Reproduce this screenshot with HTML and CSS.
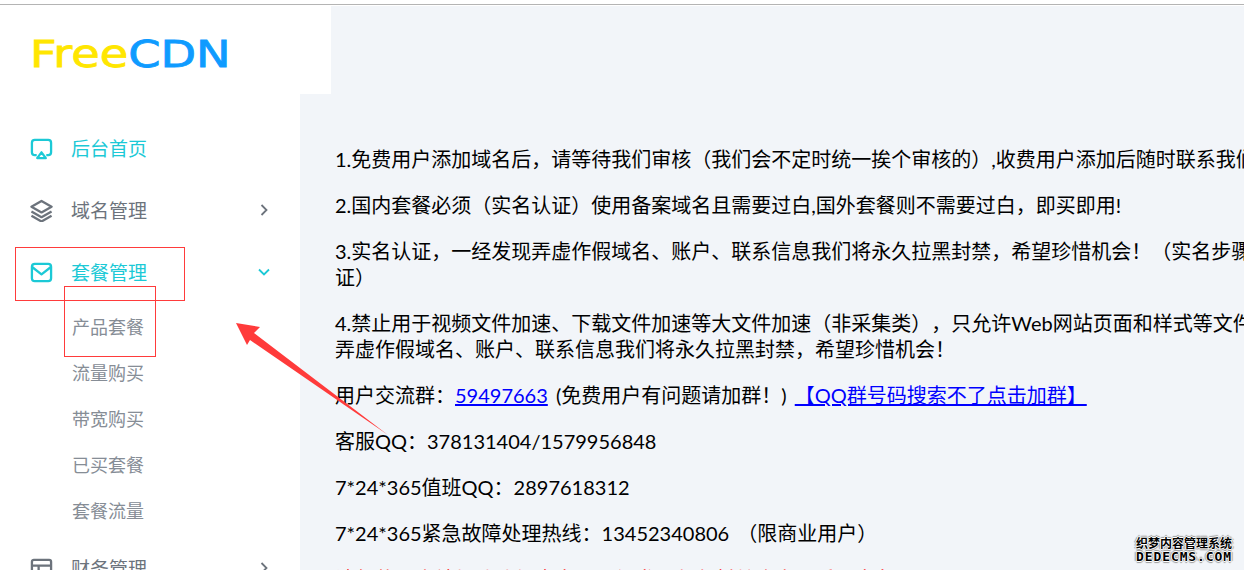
FILE: index.html
```html
<!DOCTYPE html>
<html lang="zh-CN">
<head>
    <meta charset="UTF-8">
    <meta name="viewport" content="width=device-width, initial-scale=1.0">
    <title>FreeCDN</title>
    <link rel="stylesheet" href="styles.css">
</head>
<body>
    <div id="page">
        <div class="topline"></div>
        <div class="logo-box">
            <div class="logo"><span class="logo-free">Free</span><span class="logo-cdn">CDN</span></div>
        </div>
        <div class="layout">
            <nav class="sidebar">
                <a class="nav-item active" href="#">
                    <svg class="nav-icon" viewBox="0 0 24 24"><path d="M7 19H5a3 3 0 0 1-3-3V6a3 3 0 0 1 3-3h14a3 3 0 0 1 3 3v10a3 3 0 0 1-3 3h-2"/><path d="M12 16l4.500 6h-9z"/></svg>
                    <span class="nav-text">后台首页</span>
                </a>
                <a class="nav-item" href="#">
                    <svg class="nav-icon" viewBox="0 0 24 24"><path d="M12 2L1.500 8 12 14l10.500-6z"/><path d="M1.500 13L12 19l10.500-6"/><path d="M1.500 17.500L12 23.500l10.500-6"/></svg>
                    <span class="nav-text">域名管理</span>
                    <svg class="chevron" viewBox="0 0 12 12"><path d="M3.500 1l5 5-5 5"/></svg>
                </a>
                <a class="nav-item active" href="#">
                    <svg class="nav-icon" viewBox="0 0 24 24"><rect x="2" y="3" width="20" height="18" rx="3"/><path d="M2.500 6.500L12 14l9.500-7.500"/></svg>
                    <span class="nav-text">套餐管理</span>
                    <svg class="chevron" viewBox="0 0 12 12"><path d="M1 3.500l5 5 5-5"/></svg>
                </a>
                <div class="sub-menu">
                    <a href="#">产品套餐</a>
                    <a href="#">流量购买</a>
                    <a href="#">带宽购买</a>
                    <a href="#">已买套餐</a>
                    <a href="#">套餐流量</a>
                </div>
                <a class="nav-item" href="#">
                    <svg class="nav-icon" viewBox="0 0 24 24"><rect x="2" y="3" width="20" height="18" rx="2"/><path d="M2 9h20M9 9v12"/></svg>
                    <span class="nav-text">财务管理</span>
                    <svg class="chevron" viewBox="0 0 12 12"><path d="M3.500 1l5 5-5 5"/></svg>
                </a>
            </nav>
            <main class="content">
                <p>1.免费用户添加域名后，请等待我们审核（我们会不定时统一挨个审核的）,收费用户添加后随时联系我们审核</p>
                <p>2.国内套餐必须（实名认证）使用备案域名且需要过白,国外套餐则不需要过白，即买即用!</p>
                <p>3.实名认证，一经发现弄虚作假域名、账户、联系信息我们将永久拉黑封禁，希望珍惜机会！（实名步骤请先认<br>证）</p>
                <p>4.禁止用于视频文件加速、下载文件加速等大文件加速（非采集类），只允许Web网站页面和样式等文件加速，<br>弄虚作假域名、账户、联系信息我们将永久拉黑封禁，希望珍惜机会！</p>
                <p>用户交流群：<a href="#">59497663</a> (免费用户有问题请加群！) <a href="#">【QQ群号码搜索不了点击加群】</a></p>
                <p>客服QQ：378131404/1579956848</p>
                <p>7*24*365值班QQ：2897618312</p>
                <p>7*24*365紧急故障处理热线：13452340806 （限商业用户）</p>
                <p class="notice">请勿使用本站加速违规内容，一经发现永久封禁账户，后果自负</p>
            </main>
        </div>

        <!-- annotations drawn over the screenshot -->
        <div class="mark mark-menu"></div>
        <div class="mark mark-sub"></div>
        <svg class="arrow" width="1244" height="570" viewBox="0 0 1244 570"><polygon points="236,323 260,327 254,333 388,435 250,340 247,345"/></svg>

        <div class="watermark">
            <div class="wm-cn">织梦内容管理系统</div>
            <div class="wm-en">DEDECMS.COM</div>
        </div>
    </div>
</body>
</html>
```

FILE: styles.css
```css
body {
    margin: 0;
    padding: 0;
    font-family: "Lato", "Noto Sans CJK SC", sans-serif;
    text-spacing-trim: space-all;
}

a {
    text-decoration: none;
}

#page {
    position: relative;
    width: 1244px;
    height: 570px;
    overflow: hidden;
    background: #f2f5f9;
}

.topline {
    height: 6px;
    box-sizing: border-box;
    background: #fff;
    border-top: 4px solid #fff;
    border-bottom: 1px solid #fff;
    box-shadow: inset 0 1px 0 #b4b4b4;
}

.logo-box {
    width: 331px;
    height: 88px;
    background: #fff;
}

.logo {
    padding: 27px 0 0 30px;
    font-family: "DejaVu Sans", sans-serif;
    font-size: 37px;
    line-height: 44px;
    white-space: nowrap;
    -webkit-text-stroke: 0.8px currentColor;
    transform: scaleX(1.25);
    transform-origin: 30px 0;
}

.logo-free {
    color: #ffe600;
}

.logo-cdn {
    color: #0f9bff;
}

.layout {
    display: flex;
    height: 476px;
}

.sidebar {
    width: 300px;
    flex-shrink: 0;
    box-sizing: border-box;
    padding-top: 23px;
    background: #fff;
}

.nav-item {
    display: flex;
    align-items: center;
    height: 62px;
    padding: 0 30px 0 30px;
    color: #6c737c;
}

.nav-item.active {
    color: #1cc9d6;
}

.nav-icon {
    width: 23px;
    height: 23px;
    flex-shrink: 0;
    fill: none;
    stroke: currentColor;
    stroke-width: 2.4;
    stroke-linejoin: round;
}

.nav-text {
    flex: 1;
    margin-left: 18px;
    padding-bottom: 2px;
    font-size: 19px;
}

.chevron {
    width: 12px;
    height: 12px;
    fill: none;
    stroke: currentColor;
    stroke-width: 1.8;
}

.sub-menu {
    display: flex;
    flex-direction: column;
    padding: 1px 0 3px;
}

.sub-menu a {
    height: 46px;
    line-height: 46px;
    padding-left: 72px;
    font-size: 18px;
    color: #868d96;
}

.content {
    flex: 1;
    min-width: 0;
    padding: 52px 0 0 35px;
    overflow: hidden;
    color: #000;
    font-size: 20px;
    line-height: 26px;
    word-spacing: 3px;
    white-space: nowrap;
}

.content p {
    margin: 0 0 20px;
}

.content a {
    color: #0000ff;
    text-decoration: underline;
}

.content .notice {
    color: #ff0000;
}

.mark {
    position: absolute;
    box-sizing: border-box;
    border: 1px solid #ff3b3b;
}

.mark-menu {
    left: 15px;
    top: 247px;
    width: 170px;
    height: 54px;
}

.mark-sub {
    left: 64px;
    top: 286px;
    width: 92px;
    height: 71px;
}

.arrow {
    position: absolute;
    left: 0;
    top: 0;
    fill: #ff3b3b;
}

.watermark {
    position: absolute;
    left: 1135px;
    top: 537px;
    width: 98px;
    text-align: center;
    color: #000;
    font-weight: bold;
    text-shadow: 1px 0 0 #fff, -1px 0 0 #fff, 0 1px 0 #fff, 0 -1px 0 #fff, 2px 0 1px #999, -2px 0 1px #999, 0 2px 1px #999, 0 -2px 1px #999;
}

.wm-cn {
    font-size: 12px;
    line-height: 14px;
    white-space: nowrap;
}

.wm-en {
    font-family: "DejaVu Sans Mono", monospace;
    font-size: 13px;
    line-height: 12px;
    letter-spacing: 0.9px;
    white-space: nowrap;
}
```
